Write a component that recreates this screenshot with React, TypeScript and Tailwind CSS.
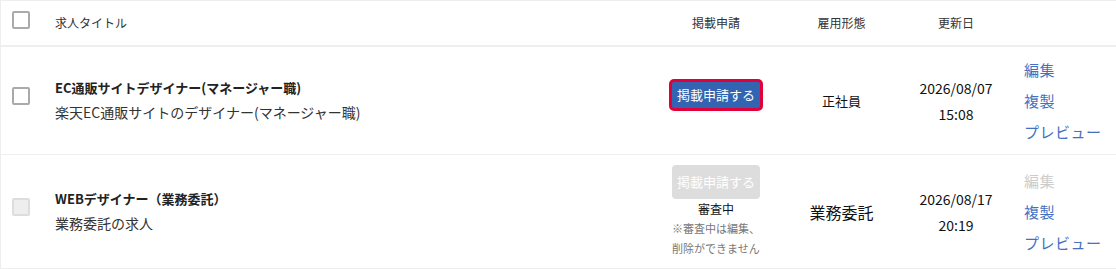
const font = "font-['Noto_Sans_CJK_JP','Noto_Sans',sans-serif]";

type Job = {
  title: string;
  desc: string;
  type: string;
  typeSize: string;
  date: string;
  time: string;
  pending: boolean;
};

const jobs: Job[] = [
  {
    title: "EC通販サイトデザイナー(マネージャー職)",
    desc: "楽天EC通販サイトのデザイナー(マネージャー職)",
    type: "正社員",
    typeSize: "text-[13px]",
    date: "2026/08/07",
    time: "15:08",
    pending: false,
  },
  {
    title: "WEBデザイナー（業務委託）",
    desc: "業務委託の求人",
    type: "業務委託",
    typeSize: "text-[16px]",
    date: "2026/08/17",
    time: "20:19",
    pending: true,
  },
];

const cols = "grid grid-cols-[38px_614px_126px_125px_104px_109px]";

function Checkbox({ disabled }: { disabled?: boolean }) {
  return (
    <span
      className={
        "block w-[18px] h-[18px] rounded-[2px] border-2 " +
        (disabled ? "bg-[#eeeeee] border-[#dddddd]" : "bg-white border-[#aaaaaa]")
      }
    />
  );
}

export default function App() {
  return (
    <div className={`w-[1116px] bg-white border-t border-l border-[#eeeeee] text-[#333333] ${font}`}>
      {/* header */}
      <div className={`${cols} h-[46px] border-b-2 border-[#eeeeee] items-center text-[12px]`}>
        <div className="flex justify-center pl-[1px] mb-[6px]">
          <Checkbox />
        </div>
        <div className="pl-[16px]">求人タイトル</div>
        <div className="text-center">掲載申請</div>
        <div className="text-center">雇用形態</div>
        <div className="text-center">更新日</div>
        <div />
      </div>

      {jobs.map((job, i) => (
        <div
          key={job.title}
          className={`${cols} ${i === 0 ? "h-[108px]" : "h-[114px]"} border-b border-[#eeeeee] items-center`}
        >
          <div className="flex justify-center pl-[1px] mb-[9px]">
            <Checkbox disabled={job.pending} />
          </div>
          <div className="pl-[16px]">
            <div className="text-[13px] font-bold leading-[22px] text-[#222222]">{job.title}</div>
            <div className="text-[14px] leading-[26px]">{job.desc}</div>
          </div>
          <div className="flex flex-col items-center">
            {job.pending ? (
              <>
                <button className="w-[88px] h-[34px] rounded-[4px] bg-[#dddddd] text-white text-[13px]">
                  掲載申請する
                </button>
                <div className="text-[12px] leading-[20px] text-[#111111]">審査中</div>
                <div className="text-[11px] leading-[19.5px] text-[#777777] w-[88px]">
                  ※審査中は編集、
                  <br />
                  削除ができません
                </div>
              </>
            ) : (
              <button className="w-[94px] h-[32px] mb-[11px] rounded-[5px] border-[3px] border-[#e2003a] bg-[#3364b2] text-white text-[13px]">
                掲載申請する
              </button>
            )}
          </div>
          <div className={`text-center text-[#111111] ${job.typeSize}`}>{job.type}</div>
          <div className="text-center text-[14px] leading-[26px] text-[#111111]">
            <div>{job.date}</div>
            <div>{job.time}</div>
          </div>
          <div className="pl-[16px] text-[15px] leading-[31px] tracking-[0.5px]">
            <div className={job.pending ? "text-[#cccccc]" : "text-[#4470c0]"}>編集</div>
            <div className="text-[#4470c0]">複製</div>
            <div className="text-[#4470c0]">プレビュー</div>
          </div>
        </div>
      ))}
    </div>
  );
}
